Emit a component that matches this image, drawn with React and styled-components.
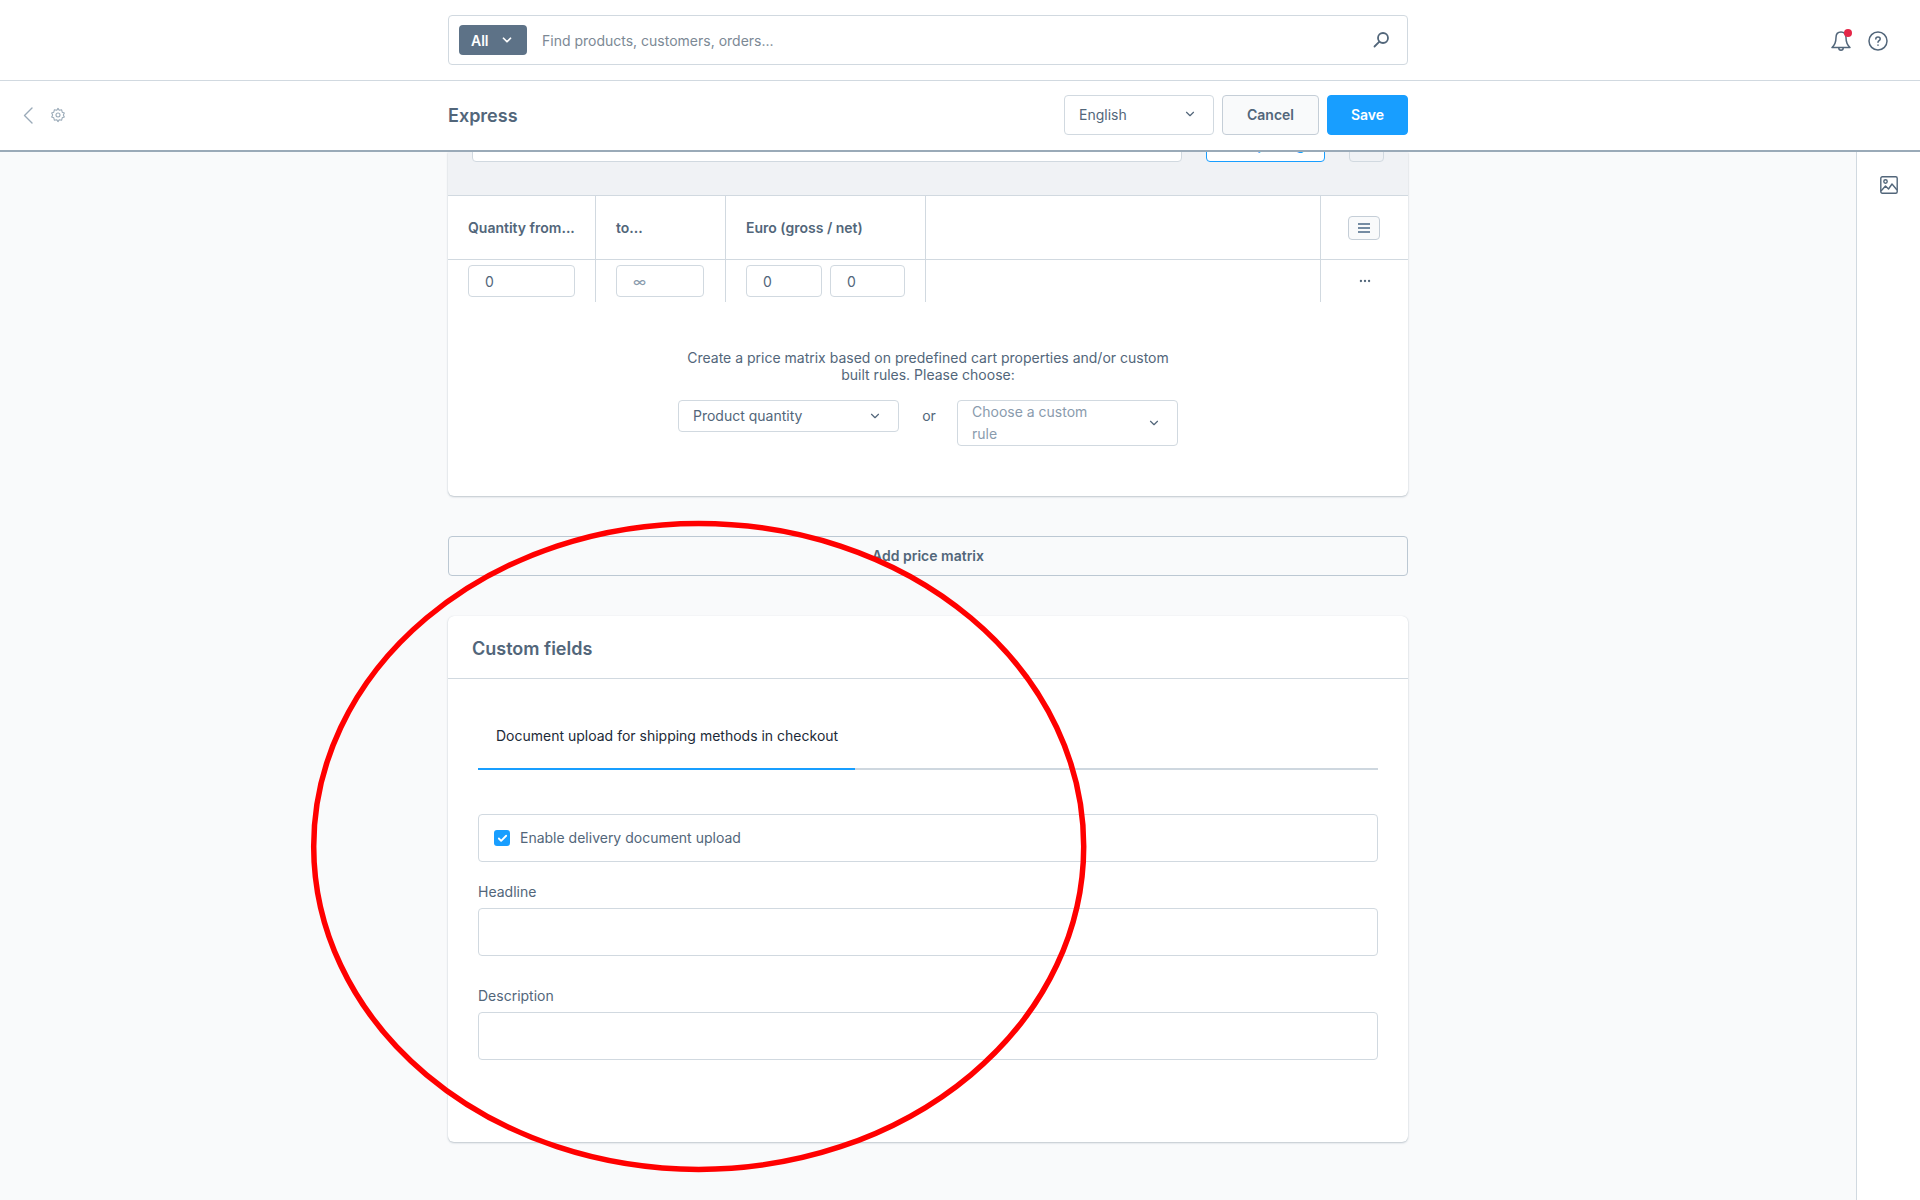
import React from 'react';
import styled, { createGlobalStyle } from 'styled-components';
import { ChevronDown, Check, Ellipsis } from 'lucide-react';

const GlobalStyle = createGlobalStyle`
  html, body {
    margin: 0;
    padding: 0;
    height: 100%;
    background: #f9fafb;
    font-family: Inter, "Noto Sans", sans-serif;
    font-size: 14px;
    color: #52667a;
  }
  * { box-sizing: border-box; }
`;

// Page frame
const Page = styled.div`
  position: relative;
  width: 1920px;
  height: 1200px;
  overflow: hidden;
  display: flex;
  flex-direction: column;
`;

const TopBar = styled.header`
  height: 81px;
  flex: none;
  background: #fff;
  border-bottom: 1px solid #d1d9e0;
  display: flex;
  align-items: flex-start;
  padding: 15px 0 0 448px;
`;

const Search = styled.div`
  width: 960px;
  height: 50px;
  border: 1px solid #d1d9e0;
  border-radius: 4px;
  display: flex;
  align-items: center;
  padding: 0 17px 0 10px;
`;

const AllButton = styled.div`
  width: 68px;
  height: 30px;
  border-radius: 4px;
  background: #5d7287;
  color: #fff;
  font-weight: 600;
  display: flex;
  align-items: center;
  justify-content: space-between;
  padding: 0 13px 0 12px;
`;

const SearchText = styled.span`
  margin-left: 15px;
  flex: 1;
  color: #7c8995;
`;

const TopIcons = styled.div`
  margin-left: 422px;
  display: flex;
  align-items: center;
  gap: 16px;
  padding-top: 14px;
`;

const BellWrap = styled.div`
  position: relative;
  width: 22px;
  height: 24px;
`;

const BellDot = styled.span`
  position: absolute;
  top: 0;
  right: 0;
  width: 8px;
  height: 8px;
  border-radius: 50%;
  background: #e52748;
`;

const ToolBar = styled.div`
  height: 71px;
  flex: none;
  background: #fff;
  border-bottom: 2px solid #9aaab8;
  padding-bottom: 1px;
  display: flex;
  align-items: center;
  position: relative;
  z-index: 1;
`;

const NavIcons = styled.div`
  width: 448px;
  flex: none;
  display: flex;
  align-items: center;
  gap: 17px;
  padding-left: 23px;
  color: #9aaab8;
`;

const Title = styled.h1`
  margin: 0;
  flex: 1;
  font-size: 18px;
  font-weight: 600;
  color: #52667a;
`;

const Actions = styled.div`
  display: flex;
  gap: 8px;
  margin-right: 512px;
`;

const LangSelect = styled.div`
  width: 150px;
  height: 40px;
  background: #fff;
  border: 1px solid #d1d9e0;
  border-radius: 4px;
  padding: 0 16px 2px 14px;
  display: flex;
  align-items: center;
  justify-content: space-between;
  color: #52667a;
`;

const Button = styled.button`
  height: 40px;
  padding: 0 0 1px;
  width: ${p => p.$width}px;
  border-radius: 4px;
  font: 600 14px Inter, sans-serif;
  border: 1px solid ${p => (p.$primary ? '#189eff' : '#c5ced7')};
  background: ${p => (p.$primary ? '#189eff' : '#f9fafb')};
  color: ${p => (p.$primary ? '#fff' : '#52667a')};
`;

const Body = styled.div`
  flex: 1;
  min-height: 0;
  display: flex;
`;

const Main = styled.main`
  flex: 1;
  padding-left: 448px;
  min-width: 0;
  overflow: hidden;
`;

const Column = styled.div`
  width: 960px;
  display: flex;
  flex-direction: column;
`;

const Sidebar = styled.aside`
  width: 64px;
  flex: none;
  background: #fff;
  border-left: 1px solid #d1d9e0;
  padding: 24px 0 0 23px;
`;

// Price matrix card
const Card = styled.section`
  background: #fff;
  border-radius: ${p => (p.$clipped ? '0 0 6px 6px' : '6px')};
  box-shadow: 0 1px 2px rgba(82, 102, 122, 0.35), 0 0 1px rgba(82, 102, 122, 0.15);
`;

const PriceCard = styled(Card)`
  height: 344px;
`;

const RuleBar = styled.div`
  height: 44px;
  background: #f0f2f5;
  border-bottom: 1px solid #d1d9e0;
  display: flex;
  align-items: flex-end;
  padding: 0 24px 33px;
  overflow: hidden;
`;

const RuleInput = styled.div`
  width: 710px;
  height: 40px;
  flex: none;
  background: #fff;
  border: 1px solid #d1d9e0;
  border-radius: 4px;
`;

const RuleAction = styled.div`
  margin-left: 24px;
  width: 119px;
  height: 40px;
  flex: none;
  padding-top: 5px;
  background: #fff;
  border: 1px solid #189eff;
  border-radius: 4px;
  color: #189eff;
  display: flex;
  align-items: center;
  justify-content: center;
  font-weight: 600;
`;

const RuleSquare = styled.div`
  margin-left: 24px;
  width: 35px;
  height: 40px;
  flex: none;
  background: #f0f2f5;
  border: 1px solid #d1d9e0;
  border-radius: 4px;
`;

const Row = styled.div`
  display: grid;
  grid-template-columns: 148px 130px 200px 395px 87px;
  height: ${p => p.$height}px;
  border-bottom: ${p => (p.$head ? '1px solid #d1d9e0' : 'none')};
`;

const Cell = styled.div`
  border-right: ${p => (p.$last ? 'none' : '1px solid #d1d9e0')};
  padding: ${p => (p.$head ? '0 16px 0 20px' : '5px 0 0 20px')};
  display: flex;
  align-items: ${p => (p.$head ? 'center' : 'flex-start')};
  justify-content: ${p => (p.$center ? 'center' : 'flex-start')};
  gap: 8px;
  font-weight: ${p => (p.$head ? 600 : 400)};
  color: #52667a;
`;

const NumberBox = styled.div`
  width: ${p => p.$width}px;
  height: 32px;
  flex: none;
  border: 1px solid #d1d9e0;
  border-radius: 4px;
  padding-left: 16px;
  display: flex;
  align-items: center;
  color: ${p => (p.$muted ? '#8a9bad' : '#52667a')};
`;

const ColumnButton = styled.div`
  width: 32px;
  height: 24px;
  margin-right: 5px;
  border: 1px solid #c5ced7;
  border-radius: 4px;
  background: #f9fafb;
  color: #758ca3;
  display: flex;
  align-items: center;
  justify-content: center;
`;

const DotsCell = styled(Cell)`
  padding: 0;
  align-items: center;
  color: #52667a;
`;

const MatrixHint = styled.div`
  width: 500px;
  margin: 47px auto 0;
  text-align: center;
  line-height: 17px;
`;

const ChoiceRow = styled.div`
  display: flex;
  justify-content: center;
  align-items: flex-start;
  margin-top: 17px;
`;

const Select = styled.div`
  width: 221px;
  min-height: 32px;
  background: #fff;
  border: 1px solid #d1d9e0;
  border-radius: 4px;
  padding: 0 16px 0 14px;
  display: flex;
  align-items: center;
  justify-content: space-between;
  line-height: 22px;
  color: ${p => (p.$placeholder ? '#8a9bad' : '#52667a')};
`;

const SelectText = styled.span`
  width: ${p => (p.$narrow ? '130px' : 'auto')};
`;

const Or = styled.span`
  width: 58px;
  text-align: center;
  padding: 7px 0 0 2px;
`;

const AddMatrix = styled.button`
  margin-top: 40px;
  height: 40px;
  padding: 0 0 2px;
  border: 1px solid #bcc8d3;
  border-radius: 4px;
  background: #f9fafb;
  font: 600 14px Inter, sans-serif;
  color: #52667a;
`;

// Custom fields card
const FieldsCard = styled(Card)`
  margin-top: 40px;
  height: 526px;
`;

const CardHeader = styled.h2`
  margin: 0;
  height: 63px;
  padding: 2px 24px 0;
  display: flex;
  align-items: center;
  font-size: 18px;
  font-weight: 600;
  color: #52667a;
  border-bottom: 1px solid #d1d9e0;
`;

const CardBody = styled.div`
  padding: 36px 30px 0;
`;

const TabBar = styled.div`
  height: 55px;
  border-bottom: 2px solid #ced7df;
  display: flex;
`;

const Tab = styled.div`
  width: 377px;
  height: 55px;
  flex: none;
  border-bottom: 2px solid #189eff;
  padding: 0 0 12px 18px;
  display: flex;
  align-items: center;
  color: #1c2a38;
`;

const CheckField = styled.div`
  height: 48px;
  margin-top: 44px;
  border: 1px solid #d1d9e0;
  border-radius: 4px;
  display: flex;
  align-items: center;
  gap: 10px;
  padding-left: 15px;
`;

const CheckLabel = styled.span`
  padding-bottom: 1px;
`;

const CheckMark = styled.span`
  width: 16px;
  height: 16px;
  border-radius: 3px;
  background: #189eff;
  color: #fff;
  display: flex;
  align-items: center;
  justify-content: center;
`;

const FieldLabel = styled.label`
  display: block;
  line-height: 20px;
  margin-top: ${p => p.$top}px;
  margin-bottom: 6px;
`;

const TextBox = styled.div`
  height: 48px;
  border: 1px solid #d1d9e0;
  border-radius: 4px;
  background: #fff;
`;

const Marker = styled.svg`
  position: absolute;
  left: 308px;
  top: 519px;
  pointer-events: none;
`;

const BackIcon = () => (
  <svg width="10" height="17" viewBox="0 0 10 17" fill="none" stroke="currentColor" strokeWidth="1.4" strokeLinecap="round" strokeLinejoin="round">
    <path d="M9 1L1.500 8.500 9 16" />
  </svg>
);

const GearIcon = () => (
  <svg width="16" height="16" viewBox="0 0 24 24" fill="none" stroke="currentColor" strokeWidth="1.6" strokeLinejoin="round">
    <circle cx="12" cy="12" r="3" />
    <path d="M12 2l2 3 3.500-.8.8 3.500 3.200 1.300-1.500 3 1.500 3-3.200 1.300-.8 3.500-3.500-.8-2 3-2-3-3.500.8-.8-3.500-3.200-1.300 1.500-3-1.500-3 3.200-1.300.8-3.500 3.500.8z" />
  </svg>
);

const SearchIcon = () => (
  <svg width="18" height="18" viewBox="0 0 18 18" fill="none" stroke="#52667a" strokeWidth="1.800" strokeLinecap="round">
    <circle cx="11" cy="7" r="5" />
    <path d="M7.400 10.600L2.500 15.500" />
  </svg>
);

const BellIcon = () => (
  <svg width="22" height="24" viewBox="0 0 22 24" fill="none" stroke="#52667a" strokeWidth="1.500" strokeLinejoin="round">
    <path d="M11 3c-3.200 0-5 2.400-5 5.600 0 5-1.200 7.600-4 9.900h18c-2.800-2.300-4-4.900-4-9.900C16 5.400 14.200 3 11 3z" />
    <path d="M8.800 19c0 1.400 1 2.200 2.200 2.200s2.200-.8 2.200-2.200" />
  </svg>
);

const HelpIcon = () => (
  <svg width="20" height="20" viewBox="0 0 20 20" fill="none" stroke="#52667a" strokeWidth="1.500" strokeLinecap="round">
    <circle cx="10" cy="10" r="9" />
    <path d="M7.800 8c0-1.200 1-2 2.200-2s2.200.8 2.200 2c0 1.600-2.200 1.700-2.200 3.300" />
    <path d="M10 14v.2" />
  </svg>
);

const ImageIcon = () => (
  <svg width="18" height="18" viewBox="0 0 18 18" fill="none" stroke="#52667a" strokeWidth="1.400" strokeLinejoin="round">
    <rect x="0.800" y="0.800" width="16.400" height="16.400" rx="1.500" />
    <circle cx="5.500" cy="5.500" r="1.700" />
    <path d="M1 15l4.500-5 3 3 3.500-5 5 6" />
  </svg>
);

const ListIcon = () => (
  <svg width="12" height="10" viewBox="0 0 12 10" fill="none" stroke="currentColor" strokeWidth="2">
    <path d="M0 1h12M0 5h12M0 9h12" />
  </svg>
);

export default function App() {
  return (
    <Page>
      <GlobalStyle />
      <TopBar>
        <Search>
          <AllButton>
            All
            <ChevronDown size={14} strokeWidth={3} />
          </AllButton>
          <SearchText>Find products, customers, orders...</SearchText>
          <SearchIcon />
        </Search>
        <TopIcons>
          <BellWrap>
            <BellIcon />
            <BellDot />
          </BellWrap>
          <HelpIcon />
        </TopIcons>
      </TopBar>

      <ToolBar>
        <NavIcons>
          <BackIcon />
          <GearIcon />
        </NavIcons>
        <Title>Express</Title>
        <Actions>
          <LangSelect>
            English
            <ChevronDown size={14} strokeWidth={2} />
          </LangSelect>
          <Button $width={97}>Cancel</Button>
          <Button $width={81} $primary>Save</Button>
        </Actions>
      </ToolBar>

      <Body>
        <Main>
          <Column>
            <PriceCard $clipped>
              <RuleBar>
                <RuleInput />
                <RuleAction>Add pricing</RuleAction>
                <RuleSquare />
              </RuleBar>
              <Row $head $height={64}>
                <Cell $head>Quantity from...</Cell>
                <Cell $head>to...</Cell>
                <Cell $head>Euro (gross / net)</Cell>
                <Cell $head />
                <Cell $head $last $center>
                  <ColumnButton>
                    <ListIcon />
                  </ColumnButton>
                </Cell>
              </Row>
              <Row $height={42}>
                <Cell><NumberBox $width={107}>0</NumberBox></Cell>
                <Cell><NumberBox $width={88} $muted>∞</NumberBox></Cell>
                <Cell>
                  <NumberBox $width={76}>0</NumberBox>
                  <NumberBox $width={75}>0</NumberBox>
                </Cell>
                <Cell />
                <DotsCell $last $center><Ellipsis size={14} strokeWidth={2} /></DotsCell>
              </Row>
              <MatrixHint>
                Create a price matrix based on predefined cart properties and/or custom built rules. Please choose:
              </MatrixHint>
              <ChoiceRow>
                <Select>
                  <SelectText>Product quantity</SelectText>
                  <ChevronDown size={14} strokeWidth={2} />
                </Select>
                <Or>or</Or>
                <Select $placeholder>
                  <SelectText $narrow>Choose a custom rule</SelectText>
                  <ChevronDown size={14} strokeWidth={2} color="#52667a" />
                </Select>
              </ChoiceRow>
            </PriceCard>

            <AddMatrix>Add price matrix</AddMatrix>

            <FieldsCard>
              <CardHeader>Custom fields</CardHeader>
              <CardBody>
                <TabBar>
                  <Tab>Document upload for shipping methods in checkout</Tab>
                </TabBar>
                <CheckField>
                  <CheckMark><Check size={11} strokeWidth={4} /></CheckMark>
                  <CheckLabel>Enable delivery document upload</CheckLabel>
                </CheckField>
                <FieldLabel $top={20}>Headline</FieldLabel>
                <TextBox />
                <FieldLabel $top={30}>Description</FieldLabel>
                <TextBox />
              </CardBody>
            </FieldsCard>
          </Column>
        </Main>
        <Sidebar>
          <ImageIcon />
        </Sidebar>
      </Body>

      <Marker width="780" height="656" viewBox="0 0 780 656">
        <ellipse cx="390.700" cy="327.400" rx="385" ry="323" fill="none" stroke="#ff0000" strokeWidth="5.500" />
      </Marker>
    </Page>
  );
}
